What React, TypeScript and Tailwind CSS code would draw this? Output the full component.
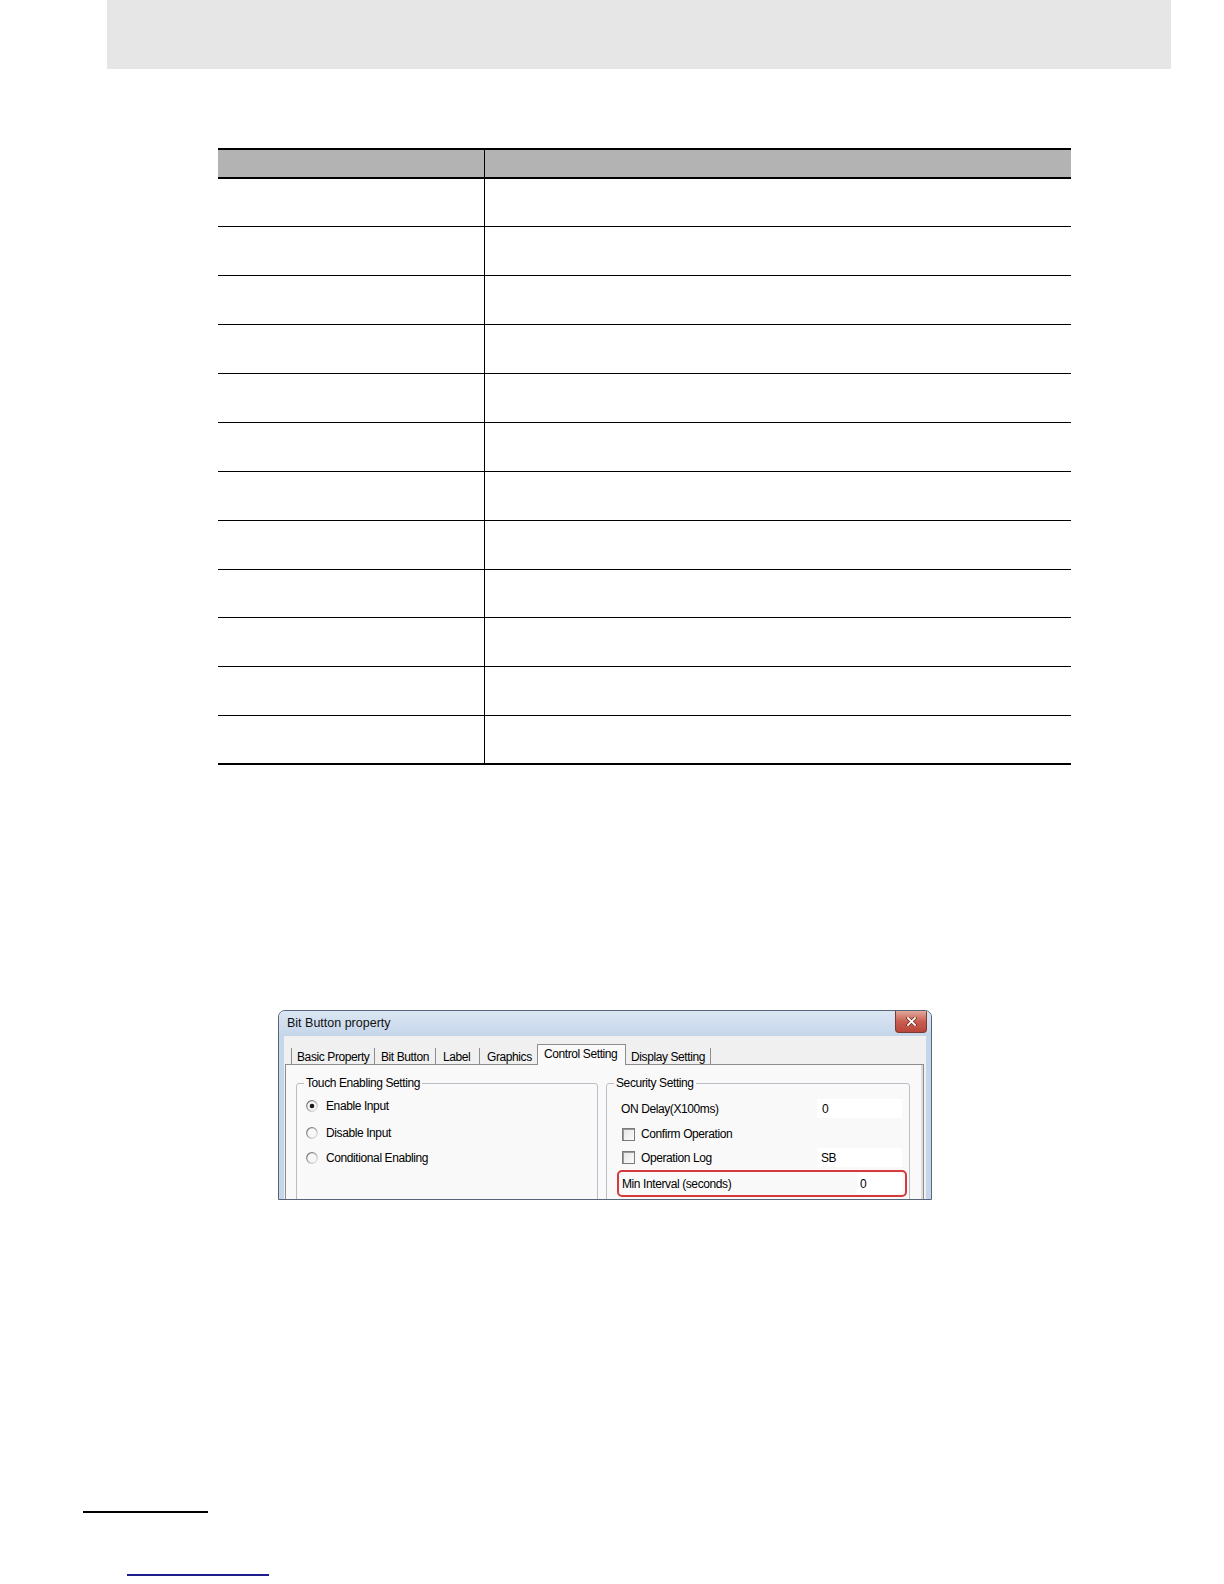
import React from "react";

const rowClasses = [
  "h-[48px]",
  "h-[49px]",
  "h-[49px]",
  "h-[49px]",
  "h-[49px]",
  "h-[49px]",
  "h-[49px]",
  "h-[49px]",
  "h-[48px]",
  "h-[49px]",
  "h-[49px]",
  "h-[49px]",
];

function Radio({ checked }: { checked?: boolean }) {
  return (
    <svg width="12" height="12" viewBox="0 0 12 12" className="shrink-0">
      <defs>
        <linearGradient id="rg" x1="0" y1="0" x2="1" y2="1">
          <stop offset="0" stopColor="#5f5f5f" />
          <stop offset="0.5" stopColor="#a8a8a8" />
          <stop offset="1" stopColor="#f2f2f2" />
        </linearGradient>
      </defs>
      <circle cx="6" cy="6" r="5.3" fill="#f7f7f7" stroke="url(#rg)" strokeWidth="1.2" />
      {checked && <circle cx="6" cy="6" r="2.3" fill="#1a1a1a" />}
    </svg>
  );
}

function Check() {
  return (
    <div className="w-[13px] h-[13px] shrink-0 border border-[#7a7a7a] bg-gradient-to-br from-[#e6e6e6] to-[#fbfbfb] shadow-[inset_1px_1px_0_#9a9a9a]" />
  );
}

function Dialog() {
  const tab = "h-[17px] flex items-center text-[12px] tracking-[-0.4px] leading-[14px] border-r border-[#8d8d8d]";
  return (
    <div className="ml-[278px] mt-[245px] w-[654px] h-[190px] overflow-hidden rounded-t-[7px] border border-[#56657a] bg-[#c6d6ea] flex flex-col text-black font-['Liberation_Sans',Arial,sans-serif]">
      <div className="h-[25px] shrink-0 flex items-start justify-between pl-[8px] pr-[4px] bg-gradient-to-b from-[#dbe6f3] to-[#c5d6ea]">
        <span className="mt-[5px] text-[12.5px] leading-[15px] text-[#111]">Bit Button property</span>
        <div className="w-[32px] h-[22px] rounded-b-[4px] border border-t-0 border-[#7a3a32] bg-gradient-to-b from-[#e2a89d] via-[#c95d4f] to-[#b9463a] flex items-center justify-center">
          <svg width="11" height="9" viewBox="0 0 11 9">
            <path d="M2 1 L9 8 M9 1 L2 8" stroke="#6a2a22" strokeWidth="3.2" strokeLinecap="square" />
            <path d="M2 1 L9 8 M9 1 L2 8" stroke="#ffffff" strokeWidth="1.8" strokeLinecap="square" />
          </svg>
        </div>
      </div>
      <div className="mx-[5px] flex-1 bg-[#f0f0f0] flex flex-col pt-[8px]">
        <div className="ml-[7px] h-[21px] flex items-end relative z-10 -mb-px">
          <div className={`${tab} w-[84px] pl-[5px] border-l`}>Basic Property</div>
          <div className={`${tab} w-[61px] pl-[6px]`}>Bit Button</div>
          <div className={`${tab} w-[44px] pl-[7px]`}>Label</div>
          <div className="h-[17px] w-[57px] pl-[7px] flex items-center text-[12px] tracking-[-0.4px] leading-[14px]">Graphics</div>
          <div className="h-[21px] w-[89px] pl-[6px] pb-[3px] flex items-center text-[12px] tracking-[-0.4px] leading-[14px] border border-b-0 border-[#8d8d8d] bg-[#fafafa]">Control Setting</div>
          <div className={`${tab} w-[85px] pl-[5px]`}>Display Setting</div>
        </div>
        <div className="ml-[1px] mr-[2px] flex-1 border border-b-0 border-[#8d8d8d] bg-[#f9f9f9] shadow-[inset_-2px_0_0_#dcdcdc] pt-[11px] pl-[10px] flex gap-[8px] text-[12px] tracking-[-0.4px]">
          <fieldset className="w-[302px] h-[140px] shrink-0 border border-[#b9bec4] rounded-[3px]">
            <legend className="ml-[7px] px-[2px] leading-[14px] text-[12px]">Touch Enabling Setting</legend>
            <div className="mt-[6px] h-[20px] flex items-center pl-[9px] gap-[8px]">
              <Radio checked />
              <span>Enable Input</span>
            </div>
            <div className="mt-[7px] h-[20px] flex items-center pl-[9px] gap-[8px]">
              <Radio />
              <span>Disable Input</span>
            </div>
            <div className="mt-[5px] h-[20px] flex items-center pl-[9px] gap-[8px]">
              <Radio />
              <span>Conditional Enabling</span>
            </div>
          </fieldset>
          <fieldset className="w-[304px] h-[140px] shrink-0 border border-[#b9bec4] rounded-[3px]">
            <legend className="ml-[7px] px-[2px] leading-[14px] text-[12px]">Security Setting</legend>
            <div className="mt-[9px] h-[19px] flex items-center pl-[14px]">
              <span className="w-[196px]">ON Delay(X100ms)</span>
              <div className="w-[85px] h-[19px] bg-white flex items-center pl-[5px]">0</div>
            </div>
            <div className="mt-[6px] h-[20px] flex items-center pl-[15px] gap-[6px]">
              <Check />
              <span>Confirm Operation</span>
            </div>
            <div className="mt-[4px] h-[19px] flex items-center pl-[15px]">
              <div className="w-[195px] flex items-center gap-[6px]">
                <Check />
                <span>Operation Log</span>
              </div>
              <div className="w-[85px] h-[19px] bg-white flex items-center pl-[4px]">SB</div>
            </div>
            <div className="mt-[3px] ml-[10px] w-[290px] h-[27px] border-2 border-[#d6393c] rounded-[5px] flex items-center pl-[3px]">
              <span className="w-[235px]">Min Interval (seconds)</span>
              <div className="flex-1 h-[21px] bg-white flex items-center pl-[3px] mr-[3px]">0</div>
            </div>
          </fieldset>
        </div>
      </div>
    </div>
  );
}

export default function App() {
  return (
    <div className="w-[1224px] h-[1584px] bg-white overflow-hidden font-['Liberation_Sans',Arial,sans-serif]">
      <div className="ml-[107px] w-[1064px] h-[69px] bg-[#e6e6e6]" />
      <div className="ml-[218px] mt-[79px] w-[853px]">
        <div className="h-[31px] flex border-t-2 border-b-2 border-black bg-[#b3b3b3]">
          <div className="w-[266px]" />
          <div className="flex-1 border-l border-black" />
        </div>
        {rowClasses.map((h, i) => (
          <div
            key={i}
            className={`${h} flex border-black ${i === rowClasses.length - 1 ? "border-b-2" : "border-b"}`}
          >
            <div className="w-[266px]" />
            <div className="flex-1 border-l border-black" />
          </div>
        ))}
      </div>
      <Dialog />
      <div className="ml-[83px] mt-[311px] w-[125px] h-[2px] bg-black" />
      <div className="ml-[127px] mt-[61px] w-[142px] h-[2px] bg-[#1c1c8a]" />
    </div>
  );
}
